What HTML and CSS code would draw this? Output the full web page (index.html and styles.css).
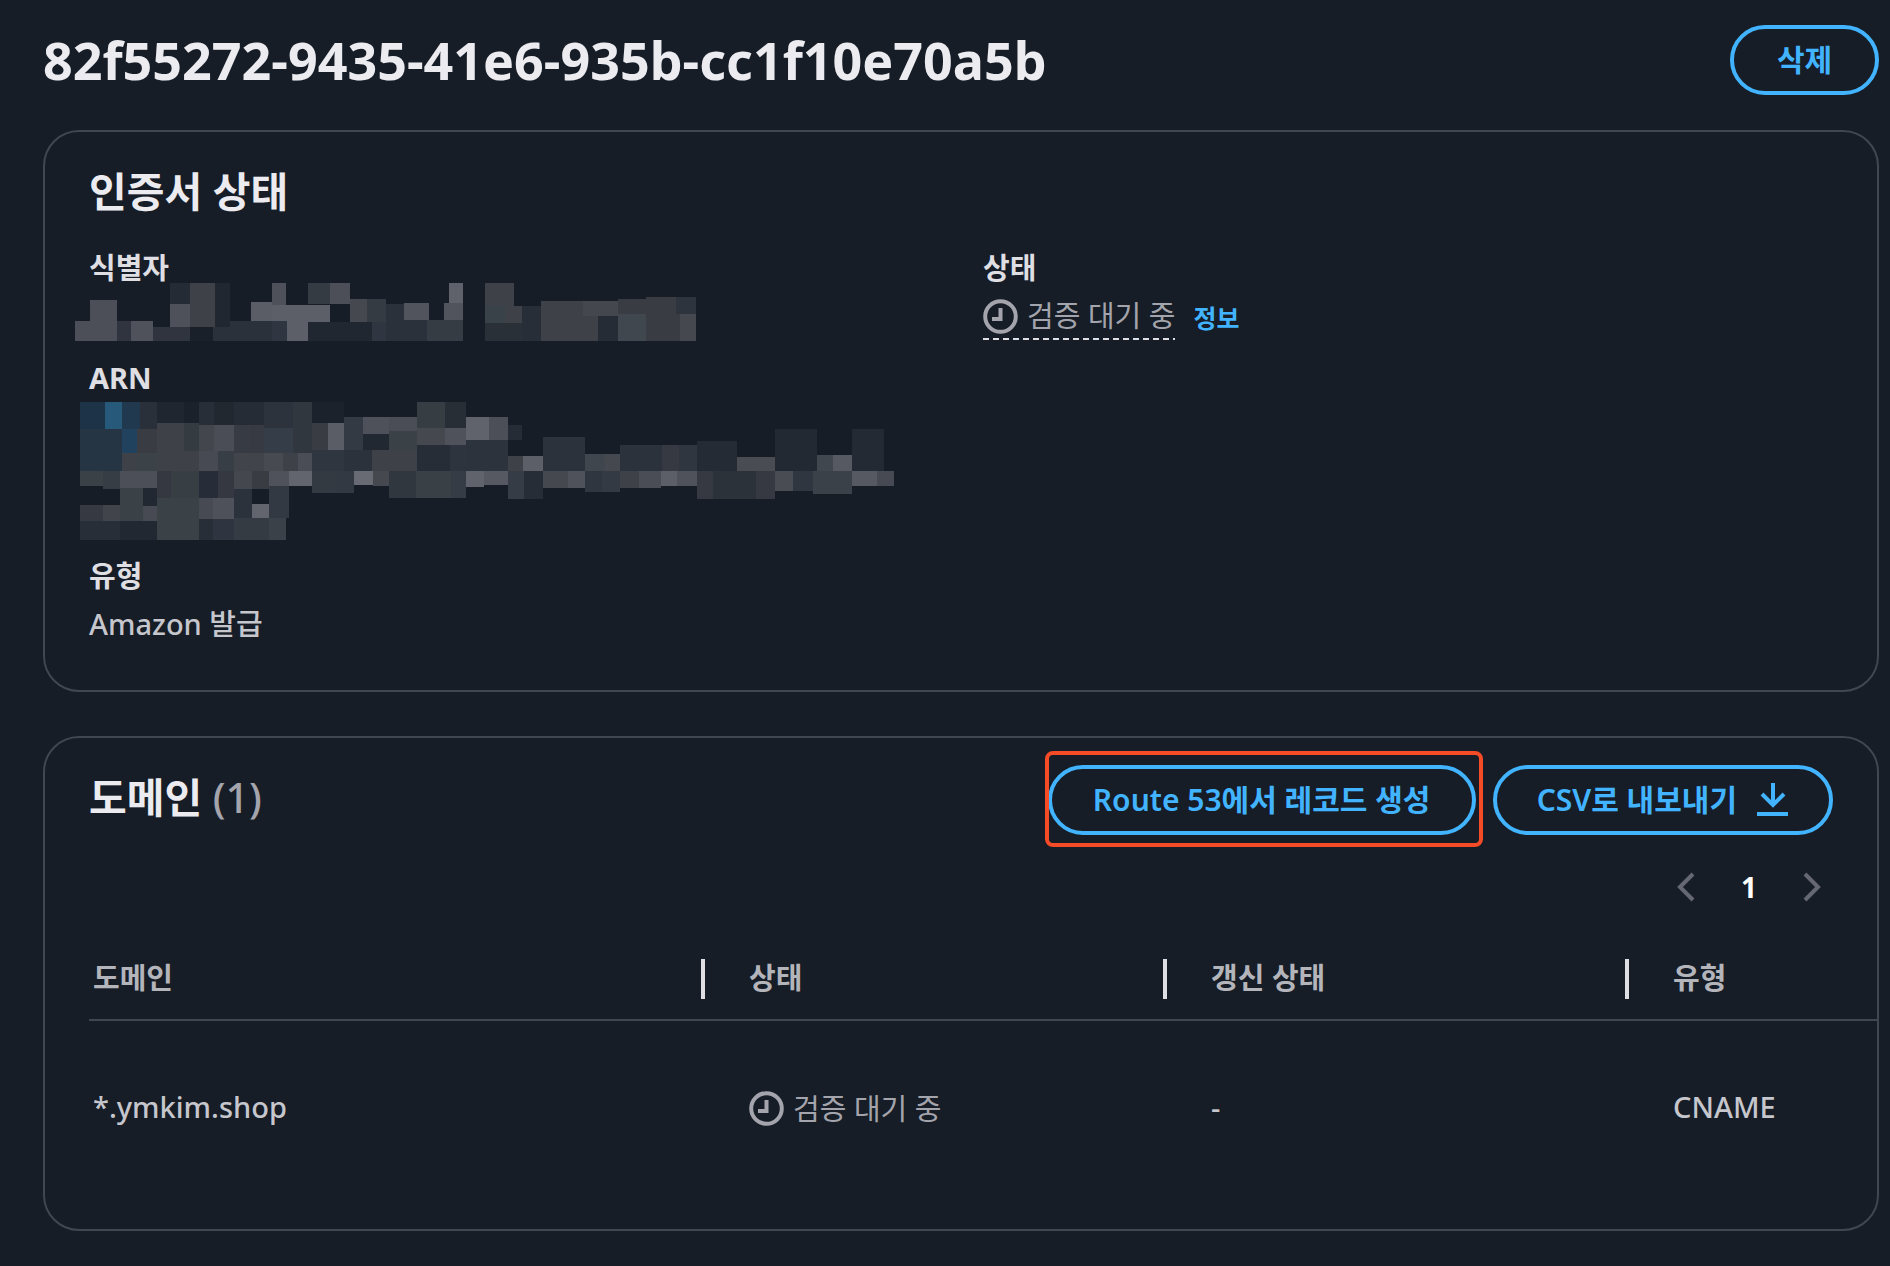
FILE: index.html
```html
<!DOCTYPE html>
<html lang="ko">
<head>
  <meta charset="UTF-8" />
  <meta name="viewport" content="width=device-width, initial-scale=1.0">
  <title>인증서 상태</title>
  <link rel="stylesheet" href="styles.css">
</head>
<body>
  <main>
    <header class="page-header">
      <h1>82f55272-9435-41e6-935b-cc1f10e70a5b</h1>
      <button type="button" class="btn">삭제</button>
    </header>

    <section class="card status-card">
      <h2>인증서 상태</h2>
      <div class="details">
        <dl>
          <div class="item">
            <dt>식별자</dt>
            <dd><svg class="mosaic mosaic-id" id="mosaicId" width="621" height="58" aria-hidden="true"></svg></dd>
          </div>
          <div class="item">
            <dt>ARN</dt>
            <dd><svg class="mosaic mosaic-arn" id="mosaicArn" width="814" height="138" aria-hidden="true"></svg></dd>
          </div>
          <div class="item">
            <dt>유형</dt>
            <dd>Amazon 발급</dd>
          </div>
        </dl>
        <dl>
          <div class="item">
            <dt>상태</dt>
            <dd class="status-line">
              <span class="pending dashed">
                <svg class="clock" viewBox="0 0 35 35"><circle cx="17.5" cy="17.5" r="15.3"/><path d="M17.5 9v11H9"/></svg>
                검증 대기 중
              </span>
              <a class="info" href="#">정보</a>
            </dd>
          </div>
        </dl>
      </div>
    </section>

    <section class="card domain-card">
      <div class="card-header">
        <h2>도메인 <span class="count">(1)</span></h2>
        <div class="actions">
          <div class="highlight">
            <button type="button" class="btn btn-route">Route 53에서 레코드 생성</button>
          </div>
          <button type="button" class="btn btn-csv">
            CSV로 내보내기
            <svg class="download" viewBox="0 0 32 34"><path d="M16 0v22M5 11l11 11 11-11M0 31h31"/></svg>
          </button>
        </div>
      </div>

      <nav class="pagination">
        <button type="button" aria-label="이전"><svg viewBox="0 0 18 30"><path d="M16 2L3 15l13 13"/></svg></button>
        <span class="page">1</span>
        <button type="button" aria-label="다음"><svg viewBox="0 0 18 30"><path d="M2 2l13 13L2 28"/></svg></button>
      </nav>

      <table>
        <colgroup>
          <col class="col-domain">
          <col class="col-status">
          <col class="col-renewal">
          <col>
        </colgroup>
        <thead>
          <tr>
            <th>도메인</th>
            <th>상태</th>
            <th>갱신 상태</th>
            <th>유형</th>
          </tr>
        </thead>
        <tbody>
          <tr>
            <td>*.ymkim.shop</td>
            <td>
              <span class="pending">
                <svg class="clock" viewBox="0 0 35 35"><circle cx="17.5" cy="17.5" r="15.3"/><path d="M17.5 9v11H9"/></svg>
                검증 대기 중
              </span>
            </td>
            <td>-</td>
            <td>CNAME</td>
          </tr>
        </tbody>
      </table>
    </section>
  </main>

  <script src="mosaic.js"></script>
</body>
</html>
```
FILE: styles.css
```css
* { box-sizing: border-box; }
body { margin: 0; background: #161d26; color: #c6c6cd; font: 500 29px/40px "Noto Sans", "Noto Sans CJK KR", sans-serif; }
main { padding: 25px 11px 35px 43px; }
h1, h2, dl, dd { margin: 0; }
h1 { font-size: 52px; font-weight: bold; line-height: 70px; color: #ebebf0; }
h2 { font-size: 41px; font-weight: 600; line-height: 50px; color: #ebebf0; }

.page-header { display: flex; justify-content: space-between; align-items: center; margin-bottom: 35px; }

.btn { min-width: 149px; height: 70px; padding: 0 40px; border: 4px solid #42b4ff; border-radius: 35px; background: transparent; color: #42b4ff; font: 600 30px/40px "Noto Sans", "Noto Sans CJK KR", sans-serif; white-space: nowrap; cursor: pointer; }
.btn-route { min-width: 428px; }
.btn-csv { display: flex; align-items: center; justify-content: center; gap: 20px; min-width: 340px; }
.download { width: 32px; height: 34px; fill: none; stroke: #42b4ff; stroke-width: 4; }

.card { border: 2px solid #424650; border-radius: 36px; }
.status-card { padding: 34px 44px 46px; margin-bottom: 44px; }
.status-card h2 { margin-bottom: 32px; }

.details { display: grid; grid-template-columns: 1fr 1fr; gap: 44px; }
.details dl { display: flex; flex-direction: column; gap: 22px; min-width: 0; }
dt { margin-bottom: 8px; font-size: 29px; font-weight: bold; color: #dedee3; }
.mosaic { display: block; shape-rendering: crispEdges; }
.mosaic-id { margin: -13px 0 -5px -14px; }
.mosaic-arn { margin: -4px 0 -6px -9px; }

.status-line { display: flex; align-items: center; gap: 18px; }
.pending { display: inline-flex; align-items: center; gap: 9px; color: #a4a4ad; font-weight: 400; white-space: nowrap; }
.dashed { padding-bottom: 4px; background: repeating-linear-gradient(90deg, #dedee3 0 6px, transparent 6px 10px) bottom / 100% 2px no-repeat; }
.clock { width: 35px; height: 35px; fill: none; stroke: #a4a4ad; stroke-width: 4; }
.info { font-size: 25px; font-weight: 600; color: #42b4ff; text-decoration: none; }

.domain-card { padding: 27px 0 36px 44px; }
.card-header { display: flex; justify-content: space-between; align-items: center; padding-right: 44px; }
.card-header h2 { padding-bottom: 6px; }
.count { color: #a4a4ad; font-weight: 500; }
.actions { display: flex; gap: 17px; }

/* red frame drawn round the Route 53 button */
.highlight { position: relative; }
.highlight::after { content: ""; position: absolute; inset: -14px -7px -12px -3px; border: 4px solid #f54b27; border-radius: 8px; pointer-events: none; }

.pagination { display: flex; justify-content: flex-end; align-items: center; gap: 46px; height: 40px; margin: 32px 56px 30px 0; }
.pagination button { display: flex; padding: 0; border: none; background: none; cursor: pointer; }
.pagination svg { width: 18px; height: 30px; fill: none; stroke: #656871; stroke-width: 4; }
.page { font-size: 28px; font-weight: bold; color: #fff; }

table { width: 100%; table-layout: fixed; border-collapse: separate; border-spacing: 0; }
.col-domain { width: 616px; }
.col-status, .col-renewal { width: 462px; }
th, td { padding: 0 0 0 44px; text-align: left; }
th:first-child, td:first-child { padding-left: 4px; }
th { position: relative; height: 84px; border-bottom: 2px solid #424650; color: #b4b4bb; font-weight: 600; }
th:not(:last-child)::after { content: ""; position: absolute; top: 22px; right: 0; width: 4px; height: 40px; background: #dedee3; }
td { height: 172px; }
td .pending { vertical-align: middle; }
```
FILE: mosaic.js
```js
// x, y, width, height, colour
const idBlocks = `
0 38 42 20 4d4f58;15 17 27 21 4d4f58;42 38 14 20 2f343e;56 38 22 20 50525b;78 44 37 14 2f343e
95 0 20 21 252b34;95 21 20 23 4f515a;115 0 25 44 3f4149;140 0 15 44 212731;115 44 23 14 1a202a
138 44 17 14 2b313a;155 38 42 20 2b313a;176 19 21 19 5a5d66;197 0 14 22 4f515a;197 22 58 17 5c5f68
197 38 15 20 303641;212 38 21 20 5c5f68;233 0 22 21 343b42;255 0 20 21 4d4f58;233 39 64 19 212731
275 16 17 23 464850;292 16 19 23 343b42;297 39 14 19 303641;311 21 41 37 2b313a;329 20 25 17 51545c
352 37 36 21 363c43;369 20 19 17 51545c;374 0 14 20 5f626b;410 0 29 23 3f4149;410 23 20 17 3a4249
430 23 17 17 3f4149;410 40 40 18 293038;447 23 19 35 272e38;466 18 57 40 3f4149;508 18 35 15 45474f
523 33 20 25 252c36;543 16 28 15 3a3c44;543 31 28 27 40474e;571 14 34 44 3a3c44;601 14 20 17 2e343e
605 31 16 27 464850`;

const arnBlocks = `
0 0 25 27 1d3347;25 0 17 27 27597a;42 0 18 27 20394f;0 27 42 42 253543;42 27 15 24 21425f
60 0 17 27 293039;57 27 20 24 3a3c44;42 51 15 18 3f4149;57 51 20 18 3b4349;77 0 27 21 1f2630
104 0 15 21 1a212b;119 0 15 23 272e37;134 0 20 23 21282f;154 0 30 23 252c35;184 0 29 26 2c333c
213 0 19 51 30373f;232 0 32 21 1c222c;77 21 27 48 3f4149;104 21 15 28 343b41;119 23 15 26 44464e
134 23 20 26 4b4d56;104 49 15 20 3f4149;119 49 19 20 484a53;138 49 16 20 383e46;154 23 16 28 363b44
170 23 14 28 383a43;184 26 29 25 353d48;154 51 30 18 42444c;184 51 19 18 484a52;203 51 15 18 3f4149
218 51 14 18 4b4d56;232 21 16 27 3a3c44;248 21 16 27 5a5d66;232 48 32 21 2f3640;264 15 19 33 343a43
283 15 26 17 4f515a;309 15 28 14 4b4d56;283 32 26 16 222831;309 29 28 19 3a4147;264 48 28 21 2c323c
292 48 45 21 3f4149;337 0 28 26 363d43;365 0 21 26 272e36;337 26 28 17 464850;365 26 21 17 50525b
337 43 33 26 272d37;370 43 16 26 2d343e;0 69 23 15 3a4147;23 69 17 18 363d44;40 69 37 17 4d4f58
77 69 14 27 363841;91 69 28 27 373e44;119 69 19 27 272d38;138 69 16 27 363841;154 69 18 18 45474f
172 69 17 18 3a3c44;189 69 20 15 50525b;209 69 23 15 62656e;232 69 23 22 333a41;255 69 19 22 333943
274 69 19 14 696b74;293 69 16 15 464850;309 69 27 27 30373f;336 69 35 27 394046;371 69 15 27 353c45
40 86 23 33 3a4147;63 86 14 18 222831;0 103 23 16 373942;23 103 17 16 42444c;63 104 14 15 484a53
0 119 40 19 272e37;40 119 37 19 212831;77 96 42 42 3a4147;119 96 14 21 484a53;133 96 21 21 4f515a
119 117 14 21 272e38;133 117 21 21 2f3540;154 87 18 29 2c323c;172 102 17 14 62656e;189 84 20 32 333943
154 116 35 22 353b43;189 116 17 22 3a4148;386 15 23 23 60636c;409 15 19 23 4d4f58;428 23 14 15 252c35
386 38 42 31 2d333d;386 69 18 16 60636c;404 69 24 14 565962;428 54 15 15 3f4149;443 54 20 15 5c5f68
428 69 16 28 353c46;444 69 19 28 262d37;463 35 42 34 2c323b;463 69 25 17 464850;488 69 17 17 50525b
505 52 20 17 3f464d;525 52 15 17 464850;505 69 17 21 2f3640;522 69 18 21 333a43;540 43 42 26 2c323b
582 43 17 26 373942;599 43 18 26 2f3640;540 69 19 17 3f4149;559 69 22 17 4b4d56;581 69 16 15 5c5f68
597 69 20 15 50525b;617 39 40 30 242b34;617 69 16 28 373942;633 69 43 28 2b3239;676 69 19 28 373942
657 55 38 14 4a4c54;695 27 42 42 222932;695 69 18 20 4a4c54;713 69 20 20 2f3640;733 69 39 23 3a4148
737 53 16 16 40474e;753 53 19 16 565962;772 27 32 42 242a33;772 69 25 15 565962;797 69 17 15 484a53`;

function drawMosaic(id, blocks) {
  const svg = document.getElementById(id);
  blocks.trim().split(/[;\n]/).forEach(block => {
    const [x, y, width, height, color] = block.split(' ');
    const rect = document.createElementNS('http://www.w3.org/2000/svg', 'rect');
    rect.setAttribute('x', x);
    rect.setAttribute('y', y);
    rect.setAttribute('width', width);
    rect.setAttribute('height', height);
    rect.setAttribute('fill', '#' + color);
    svg.appendChild(rect);
  });
}

drawMosaic('mosaicId', idBlocks);
drawMosaic('mosaicArn', arnBlocks);
```
